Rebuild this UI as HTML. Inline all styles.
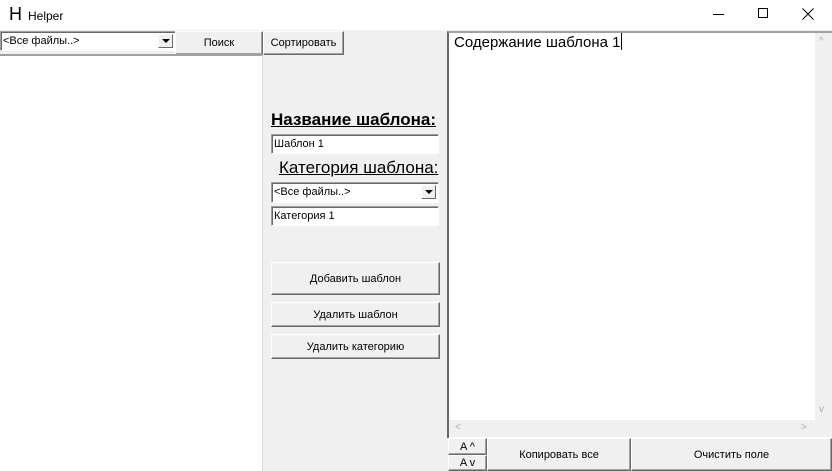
<!DOCTYPE html>
<html><head><meta charset="utf-8"><style>
*{box-sizing:border-box;margin:0;padding:0}
body{width:832px;height:471px;position:relative;overflow:hidden;background:#f0f0f0;font-family:"Liberation Sans",sans-serif;font-size:11px;color:#000}
.a{position:absolute}
.btn{position:absolute;background:#f0f0f0;border:1px solid;border-color:#fff #696969 #696969 #fff;box-shadow:inset -1px -1px 0 #a0a0a0;display:flex;align-items:center;justify-content:center;font-size:11px}
.inp{position:absolute;background:#fff;border:1px solid;border-color:#a0a0a0 #fff #fff #a0a0a0;box-shadow:inset 1px 1px 0 #696969;font-size:11px;padding:3px 0 0 2px}
.dd{position:absolute;right:2px;top:2px;width:15px;height:14px;background:#f0f0f0;border:1px solid;border-color:#fff #696969 #696969 #fff}
.dd:after{content:"";position:absolute;left:3px;top:4px;border-left:4px solid transparent;border-right:4px solid transparent;border-top:4px solid #000}
</style></head><body>
<div class="a" style="left:0;top:0;width:832px;height:30px;background:#fff"></div>
<div class="a" style="left:9px;top:4px;font-size:18px">H</div>
<div class="a" style="left:28px;top:9px;font-size:12px">Helper</div>
<div class="a" style="left:713px;top:14px;width:11px;height:1px;background:#000"></div>
<div class="a" style="left:758px;top:8px;width:10px;height:10px;border:1px solid #000"></div>
<svg class="a" style="left:802px;top:8px" width="12" height="12"><path d="M0.5 0.5L11.5 11.5M11.5 0.5L0.5 11.5" stroke="#000" stroke-width="1"/></svg>

<div class="inp" style="left:0;top:31px;width:176px;height:20px;padding-top:3px">&lt;Все файлы..&gt;<div class="dd"></div></div>
<div class="btn" style="left:175px;top:31px;width:88px;height:24px">Поиск</div>
<div class="btn" style="left:263px;top:31px;width:81px;height:24px">Сортировать</div>
<div class="a" style="left:0;top:54px;width:263px;height:417px;background:#fff;border-top:2px solid #a0a0a0;border-right:1px solid #e0e0e0"></div>

<div class="a" style="left:271px;top:110px;font-size:17px;font-weight:bold;text-decoration:underline">Название шаблона:</div>
<div class="inp" style="left:271px;top:134px;width:168px;height:20px">Шаблон 1</div>
<div class="a" style="left:279px;top:158px;font-size:17px;text-decoration:underline">Категория шаблона:</div>
<div class="inp" style="left:271px;top:182px;width:168px;height:21px">&lt;Все файлы..&gt;<div class="dd"></div></div>
<div class="inp" style="left:271px;top:206px;width:168px;height:20px">Категория 1</div>
<div class="btn" style="left:271px;top:262px;width:169px;height:33px">Добавить шаблон</div>
<div class="btn" style="left:271px;top:302px;width:169px;height:25px">Удалить шаблон</div>
<div class="btn" style="left:271px;top:334px;width:169px;height:25px">Удалить категорию</div>

<div class="a" style="left:447px;top:31px;width:385px;height:407px;background:#fff;border-left:2px solid #696969;border-top:2px solid #a0a0a0"></div>
<div class="a" style="left:454px;top:33px;font-size:15px">Содержание шаблона 1<span style="display:inline-block;width:1px;height:17px;background:#000;vertical-align:-3px"></span></div>
<div class="a" style="left:815px;top:33px;width:17px;height:387px;background:#f0f0f0"></div>
<div class="a" style="left:449px;top:420px;width:383px;height:17px;background:#f0f0f0"></div>
<div class="a" style="left:819px;top:36px;color:#aaa;font-size:10px">^</div>
<div class="a" style="left:819px;top:404px;color:#aaa;font-size:10px">v</div>
<div class="a" style="left:455px;top:422px;color:#aaa;font-size:10px">&lt;</div>
<div class="a" style="left:801px;top:422px;color:#aaa;font-size:10px">&gt;</div>

<div class="btn" style="left:448px;top:438px;width:39px;height:17px">A ^</div>
<div class="btn" style="left:448px;top:455px;width:39px;height:16px">A v</div>
<div class="btn" style="left:487px;top:438px;width:144px;height:33px">Копировать все</div>
<div class="btn" style="left:631px;top:438px;width:201px;height:33px">Очистить поле</div>
</body></html>
